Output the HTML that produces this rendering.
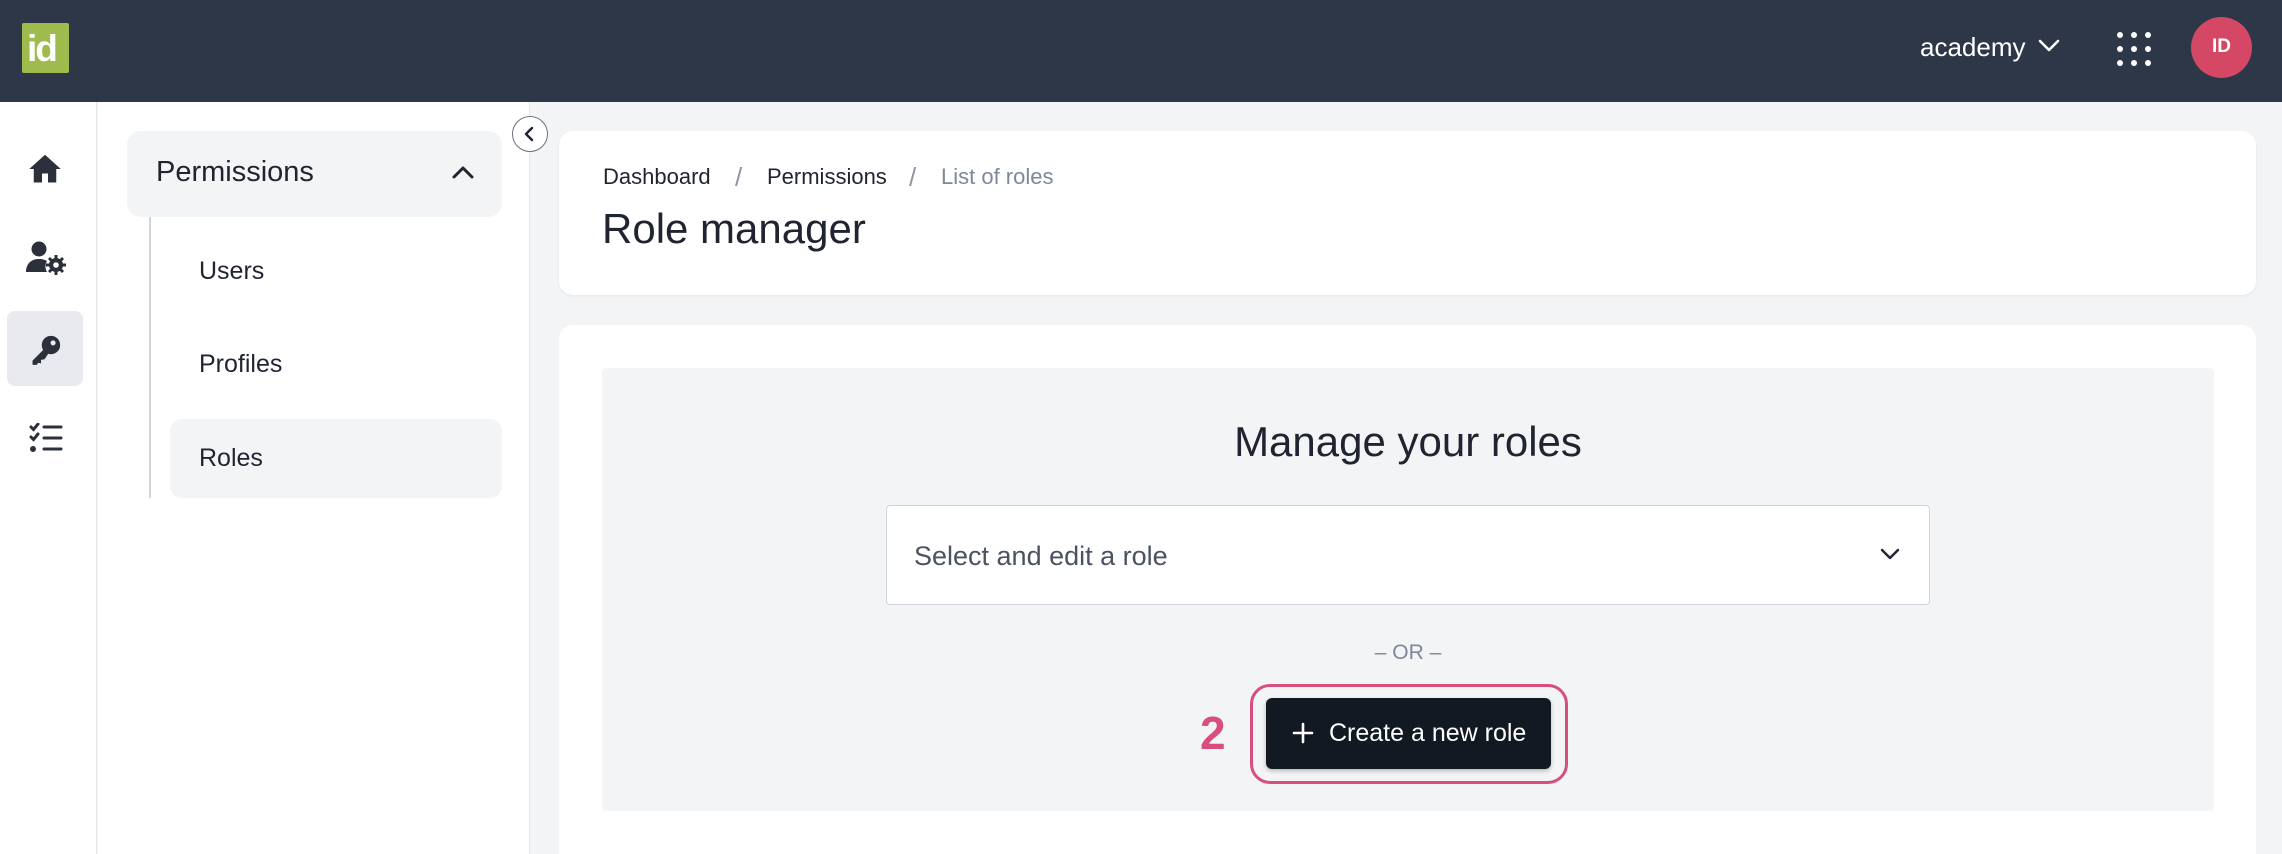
<!DOCTYPE html>
<html style="width:2282px;height:854px;overflow:hidden"><head><meta charset="utf-8"><style>
*{margin:0;padding:0;box-sizing:border-box}
body{width:2282px;height:854px;overflow:hidden;background:#f3f4f6;font-family:"Liberation Sans",sans-serif;position:relative;color:#1f2430}
.a{position:absolute}
.t{white-space:nowrap;line-height:1}
</style></head><body>
<!-- header -->
<div class="a" style="left:0;top:0;width:2282px;height:102px;background:#2e3748"></div>
<div class="a" style="left:22px;top:23px;width:47px;height:50px;background:#9fbb4e;border-radius:2px"></div>
<div class="a t" style="left:27px;top:30px;font-size:37px;font-weight:bold;color:#fff;letter-spacing:-2px">id</div>
<div class="a t" style="left:1920px;top:34px;font-size:26px;color:#fff">academy</div>
<svg class="a" style="left:2037px;top:38px" width="24" height="16" viewBox="0 0 24 16"><path d="M3 3l9 9 9-9" fill="none" stroke="#fff" stroke-width="2.6" stroke-linecap="round" stroke-linejoin="round"/></svg>
<svg class="a" style="left:2114px;top:30px" width="40" height="40" viewBox="0 0 40 40" fill="#fff"><circle cx="6" cy="5" r="3"/><circle cx="20" cy="5" r="3"/><circle cx="34" cy="5" r="3"/><circle cx="6" cy="19" r="3"/><circle cx="20" cy="19" r="3"/><circle cx="34" cy="19" r="3"/><circle cx="6" cy="33" r="3"/><circle cx="20" cy="33" r="3"/><circle cx="34" cy="33" r="3"/></svg>
<div class="a" style="left:2191px;top:17px;width:61px;height:61px;border-radius:50%;background:#d44866"></div>
<div class="a t" style="left:2191px;top:37px;width:61px;text-align:center;font-size:19px;font-weight:bold;color:#fff">ID</div>
<!-- rail -->
<div class="a" style="left:0;top:102px;width:97px;height:752px;background:#fff;border-right:1px solid #e5e7eb"></div>
<div class="a" style="left:7px;top:311px;width:76px;height:75px;background:#e8eaef;border-radius:8px"></div>
<svg class="a" style="left:27px;top:151px" width="36" height="36" viewBox="0 0 24 24" fill="#2b303b"><path d="M12 2.5L1.5 12h3v9h5.5v-6h4v6h5.5v-9h3z"/></svg>
<svg class="a" style="left:26px;top:240px" width="40" height="36" viewBox="0 0 40 36" fill="#2b303b"><circle cx="13" cy="9" r="7.5"/><path d="M0 32c0-8 5-13 13-13 4 0 6 1 8 2-2 3-2 8 0 11z"/><circle cx="30" cy="25" r="7" fill="#2b303b"/><circle cx="30" cy="25" r="2.8" fill="#fff"/><path d="M30 15v4M30 31v4M20 25h4M36 25h4M23 18l3 3M34 29l3 3M23 32l3-3M34 21l3-3" stroke="#2b303b" stroke-width="3"/></svg>
<svg class="a" style="left:29px;top:333px" width="34" height="34" viewBox="0 0 24 24" fill="#2b303b"><circle cx="15.5" cy="8.5" r="6.5"/><circle cx="17" cy="7" r="1.8" fill="#e8eaef"/><path d="M10.5 11.5L2.5 19.5v3h3l1-1.5 2 .5v-2.5l2.5-.5L14 14z"/></svg>
<svg class="a" style="left:29px;top:423px" width="34" height="30" viewBox="0 0 34 30" fill="none" stroke="#2b303b" stroke-width="3" stroke-linecap="round"><path d="M2 4l2.5 2.5L9 1M2 14l2.5 2.5L9 11"/><circle cx="4" cy="26" r="1.5" fill="#2b303b"/><path d="M15 4h17M15 15h17M15 26h17"/></svg>
<!-- sidebar -->
<div class="a" style="left:98px;top:102px;width:432px;height:752px;background:#fff;border-right:1px solid #e5e7eb"></div>
<div class="a" style="left:127px;top:131px;width:375px;height:86px;background:#f3f4f6;border-radius:14px"></div>
<div class="a t" style="left:156px;top:158px;font-size:29px;color:#1f2430">Permissions</div>
<svg class="a" style="left:451px;top:164px" width="24" height="16" viewBox="0 0 24 16"><path d="M3 13l9-9 9 9" fill="none" stroke="#1f2430" stroke-width="3" stroke-linecap="round" stroke-linejoin="round"/></svg>
<div class="a" style="left:149px;top:217px;width:2px;height:281px;background:#d1d5db"></div>
<div class="a t" style="left:199px;top:259px;font-size:25px">Users</div>
<div class="a t" style="left:199px;top:352px;font-size:25px">Profiles</div>
<div class="a" style="left:170px;top:419px;width:332px;height:79px;background:#f3f4f6;border-radius:12px"></div>
<div class="a t" style="left:199px;top:446px;font-size:25px">Roles</div>
<div class="a" style="left:512px;top:116px;width:36px;height:36px;border-radius:50%;background:#fff;border:1.5px solid #6b7280"></div>
<svg class="a" style="left:522px;top:125px" width="16" height="18" viewBox="0 0 16 18"><path d="M10 3L4 9l6 6" fill="none" stroke="#1f2430" stroke-width="2.4" stroke-linecap="round" stroke-linejoin="round"/></svg>
<!-- card 1 -->
<div class="a" style="left:559px;top:131px;width:1697px;height:164px;background:#fff;border-radius:14px;box-shadow:0 1px 3px rgba(0,0,0,.06)"></div>
<div class="a t" style="left:603px;top:166px;font-size:22px;color:#1f2430">Dashboard</div>
<div class="a t" style="left:735px;top:164px;font-size:26px;color:#8c96a6">/</div>
<div class="a t" style="left:767px;top:166px;font-size:22px;color:#1f2430">Permissions</div>
<div class="a t" style="left:909px;top:164px;font-size:26px;color:#8c96a6">/</div>
<div class="a t" style="left:941px;top:166px;font-size:22px;color:#7d889a">List of roles</div>
<div class="a t" style="left:602px;top:208px;font-size:42px;color:#1f2430">Role manager</div>
<!-- card 2 -->
<div class="a" style="left:559px;top:325px;width:1697px;height:529px;background:#fff;border-radius:14px 14px 0 0"></div>
<div class="a" style="left:602px;top:368px;width:1612px;height:443px;background:#f3f4f6;border-radius:4px"></div>
<div class="a t" style="left:602px;top:421px;width:1612px;text-align:center;font-size:42px;color:#1f2430">Manage your roles</div>
<div class="a" style="left:886px;top:505px;width:1044px;height:100px;background:#fff;border:1.5px solid #cfd3da;border-radius:4px"></div>
<div class="a t" style="left:914px;top:543px;font-size:27px;color:#4b5260">Select and edit a role</div>
<svg class="a" style="left:1879px;top:547px" width="22" height="14" viewBox="0 0 22 14"><path d="M3 3l8 8 8-8" fill="none" stroke="#1f2430" stroke-width="2.4" stroke-linecap="round" stroke-linejoin="round"/></svg>
<div class="a t" style="left:602px;top:642px;width:1612px;text-align:center;font-size:21px;color:#7d889a">– OR –</div>
<div class="a" style="left:1250px;top:684px;width:318px;height:100px;border:3.5px solid #d64f7f;border-radius:20px"></div>
<div class="a" style="left:1266px;top:698px;width:285px;height:71px;background:#131922;border-radius:6px;box-shadow:0 2px 4px rgba(0,0,0,.25)"></div>
<svg class="a" style="left:1292px;top:722px" width="22" height="22" viewBox="0 0 22 22"><path d="M11 2v18M2 11h18" stroke="#fff" stroke-width="2.6" stroke-linecap="round"/></svg>
<div class="a t" style="left:1329px;top:721px;font-size:25px;color:#fff">Create a new role</div>
<div class="a t" style="left:1200px;top:710px;font-size:46px;font-weight:bold;color:#d64f7f">2</div>
</body></html>
